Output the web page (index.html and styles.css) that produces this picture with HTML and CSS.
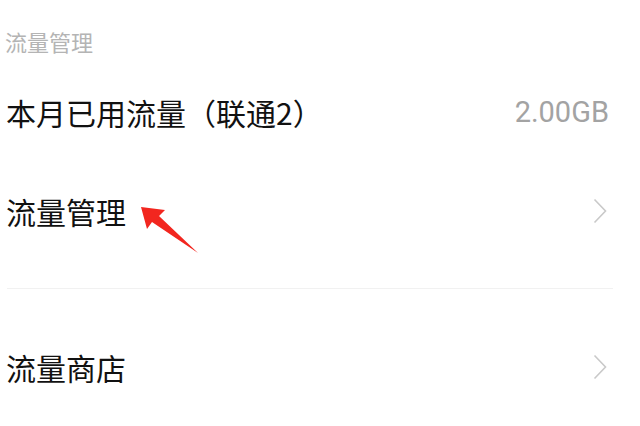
FILE: index.html
```html
<!DOCTYPE html>
<html lang="zh-CN">
<head>
<meta charset="utf-8">
<title>流量管理</title>
<link rel="stylesheet" href="styles.css">
</head>
<body>
<div class="page">
  <div class="section-title">流量管理</div>
  <div class="row row-usage">
    <span class="label">本月已用流量（联通2）</span>
    <span class="value">2.00GB</span>
  </div>
  <div class="row row-manage">
    <span class="label">流量管理</span>
    <svg class="chev" width="14" height="26" viewBox="0 0 14 26"><path d="M1.5 1.5 L12.5 13 L1.5 24.5" fill="none" stroke="#c9c9c9" stroke-width="1.6"/></svg>
  </div>
  <div class="divider"></div>
  <div class="row row-store">
    <span class="label">流量商店</span>
    <svg class="chev" width="14" height="26" viewBox="0 0 14 26"><path d="M1.5 1.5 L12.5 13 L1.5 24.5" fill="none" stroke="#c9c9c9" stroke-width="1.6"/></svg>
  </div>
  <svg class="arrow" width="640" height="426" viewBox="0 0 640 426"><polygon points="141,207 165,210 159,216 198,253 152,222 147,229" fill="#f2261f"/></svg>
</div>
</body>
</html>
```
FILE: styles.css
```css
html, body {
  margin: 0;
  padding: 0;
  background: #ffffff;
}
.page {
  position: relative;
  width: 640px;
  height: 426px;
  overflow: hidden;
  font-family: "Noto Sans CJK SC", "Noto Sans", sans-serif;
}
.section-title {
  height: 82px;
  display: flex;
  align-items: center;
  padding-left: 5px;
  font-size: 22px;
  line-height: 1;
  color: #b4b4b4;
}
.row {
  display: flex;
  align-items: center;
  justify-content: space-between;
  padding: 0 33px 0 6px;
}
.row-usage { height: 60px; padding-right: 31px; }
.row-manage { height: 138px; }
.row-store { height: 156px; }
.label {
  font-size: 30px;
  line-height: 1;
  color: #111111;
}
.value {
  font-family: Roboto, "Noto Sans", sans-serif;
  font-size: 29px;
  line-height: 1;
  color: #a3a3a3;
}
.chev { display: block; }
.divider {
  margin: 8px 27px 0 7px;
  height: 1px;
  background: #f1f1f1;
}
.arrow {
  position: absolute;
  left: 0;
  top: 0;
  pointer-events: none;
}
```
